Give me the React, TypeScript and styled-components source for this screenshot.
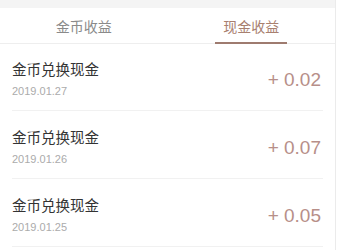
import styled, { createGlobalStyle } from "styled-components";

const GlobalStyle = createGlobalStyle`
  html, body {
    margin: 0;
    padding: 0;
    background: #ffffff;
  }
  body {
    font-family: "Liberation Sans", "Noto Sans CJK SC", sans-serif;
  }
`;

type Registro = {
  titulo: string;
  data: string;
  valor: string;
};

const registros: Registro[] = [
  { titulo: "金币兑换现金", data: "2019.01.27", valor: "+ 0.02" },
  { titulo: "金币兑换现金", data: "2019.01.26", valor: "+ 0.07" },
  { titulo: "金币兑换现金", data: "2019.01.25", valor: "+ 0.05" },
];

function App() {
  return (
    <>
      <GlobalStyle />
      <Pagina>
        <Topo />
        <Abas>
          <Aba>金币收益</Aba>
          <Aba $ativa>现金收益</Aba>
        </Abas>
        <Lista>
          {registros.map((r) => (
            <Linha key={r.data}>
              <Info>
                <Titulo>{r.titulo}</Titulo>
                <Data>{r.data}</Data>
              </Info>
              <Valor>{r.valor}</Valor>
            </Linha>
          ))}
        </Lista>
      </Pagina>
    </>
  );
}

const Pagina = styled.main`
  width: 335px;
  height: 250px;
  overflow: hidden;
  border-right: 1px solid #ebebeb;
  background: #ffffff;
`;

const Topo = styled.div`
  height: 8px;
  background: #f4f4f4;
`;

const Abas = styled.nav`
  display: grid;
  grid-template-columns: 1fr 1fr;
  height: 35px;
  border-bottom: 1px solid #eeeeee;
`;

const Aba = styled.div<{ $ativa?: boolean }>`
  position: relative;
  display: flex;
  align-items: center;
  justify-content: center;
  font-size: 14px;
  color: ${(p) => (p.$ativa ? "#a8806f" : "#8a8a8a")};
  &::after {
    content: "";
    display: ${(p) => (p.$ativa ? "block" : "none")};
    position: absolute;
    left: 50%;
    bottom: -1px;
    width: 72px;
    height: 2px;
    margin-left: -36px;
    background: #9e7b6f;
  }
`;

const Lista = styled.section`
  display: flex;
  flex-direction: column;
`;

const Linha = styled.div`
  display: flex;
  align-items: center;
  justify-content: space-between;
  box-sizing: border-box;
  height: 68px;
  margin: 0 12px;
  padding: 17px 2px 11px 0;
  border-bottom: 1px solid #f1f1f1;
  &:first-child {
    height: 67px;
    padding-top: 16px;
  }
`;

const Info = styled.div`
  display: flex;
  flex-direction: column;
  gap: 4px;
`;

const Titulo = styled.span`
  font-size: 14.5px;
  line-height: 20px;
  color: #333333;
`;

const Data = styled.span`
  font-size: 11px;
  line-height: 15px;
  color: #ababab;
`;

const Valor = styled.span`
  font-size: 19px;
  line-height: 24px;
  color: #b78f89;
`;

export default App;
